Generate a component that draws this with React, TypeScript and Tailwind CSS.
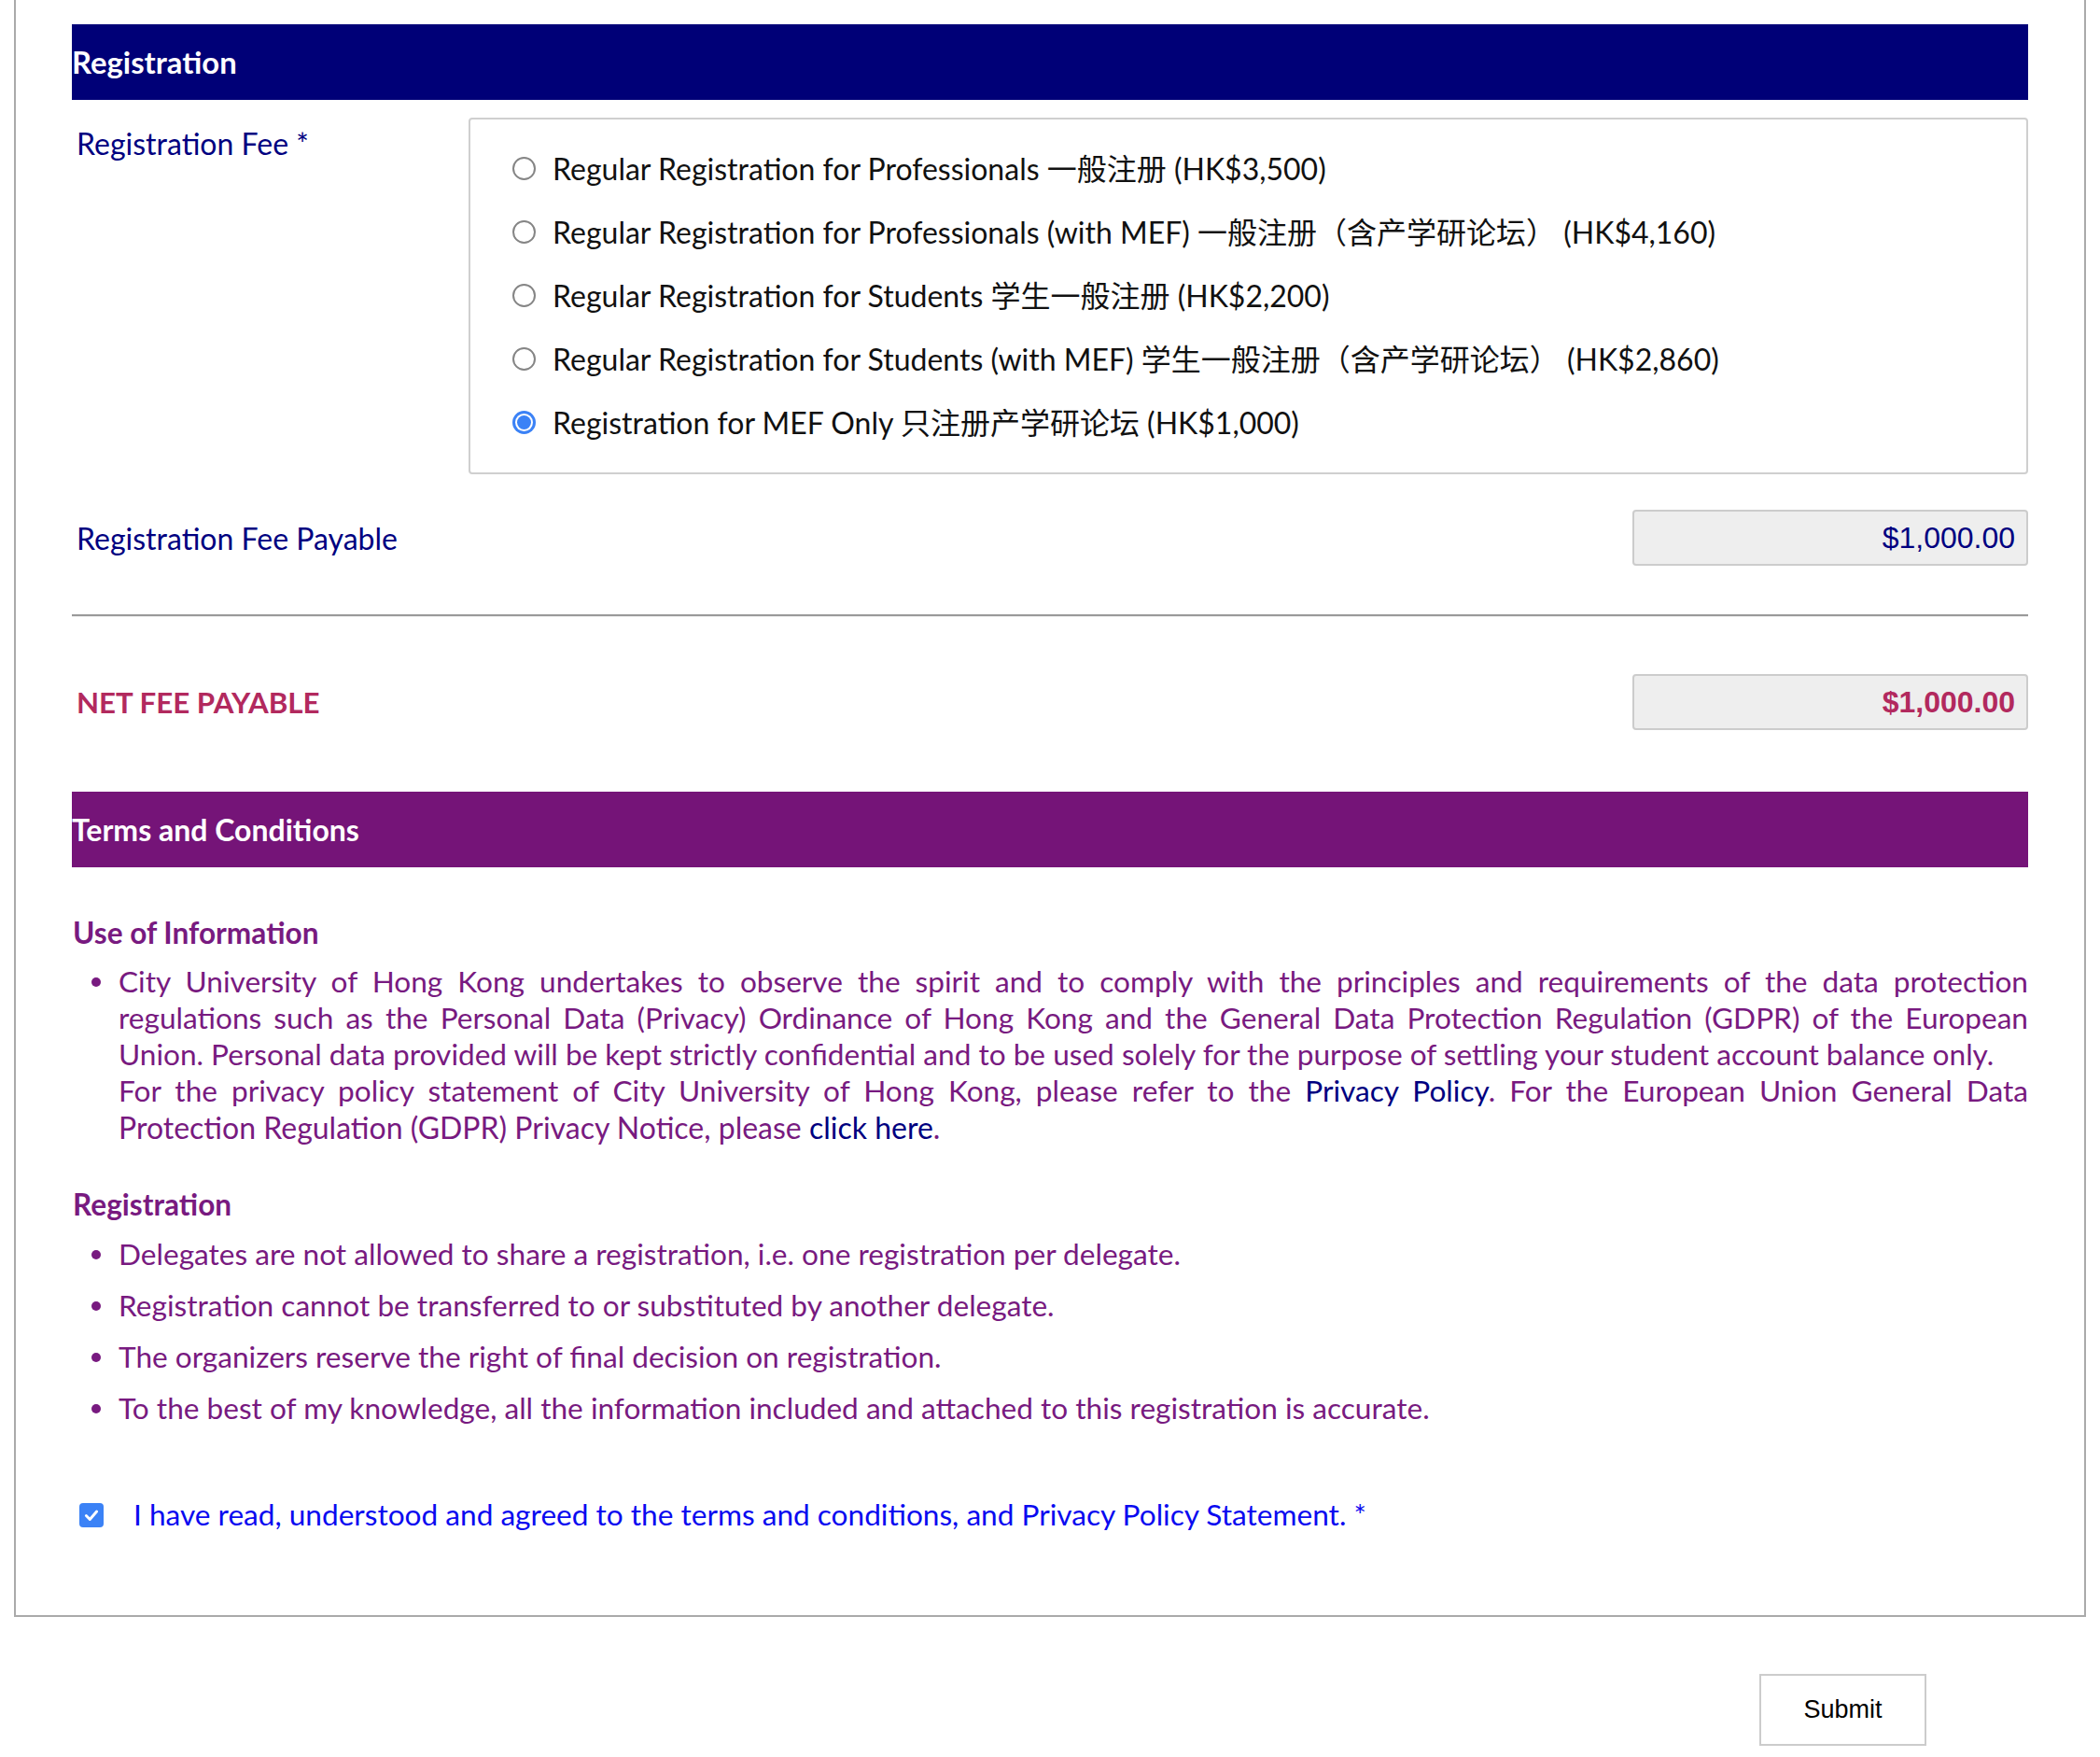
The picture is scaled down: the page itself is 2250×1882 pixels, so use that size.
import React from "react";

const options = [
  { text: "Regular Registration for Professionals 一般注册 (HK$3,500)", checked: false },
  { text: "Regular Registration for Professionals (with MEF) 一般注册（含产学研论坛） (HK$4,160)", checked: false },
  { text: "Regular Registration for Students 学生一般注册 (HK$2,200)", checked: false },
  { text: "Regular Registration for Students (with MEF) 学生一般注册（含产学研论坛） (HK$2,860)", checked: false },
  { text: "Registration for MEF Only 只注册产学研论坛 (HK$1,000)", checked: true },
];

const bullets = [
  "Delegates are not allowed to share a registration, i.e. one registration per delegate.",
  "Registration cannot be transferred to or substituted by another delegate.",
  "The organizers reserve the right of final decision on registration.",
  "To the best of my knowledge, all the information included and attached to this registration is accurate.",
];

function Radio({ checked }: { checked: boolean }) {
  if (checked) {
    return (
      <span className="flex h-[25px] w-[25px] shrink-0 items-center justify-center rounded-full bg-[#3b82f6]">
        <span className="flex h-[19px] w-[19px] items-center justify-center rounded-full bg-white">
          <span className="h-[15px] w-[15px] rounded-full bg-[#3b82f6]" />
        </span>
      </span>
    );
  }
  return <span className="h-[25px] w-[25px] shrink-0 rounded-full border-2 border-[#858585] bg-white" />;
}

function Bullet({ children }: { children: React.ReactNode }) {
  return (
    <li className="flex">
      <span className="flex h-[39px] w-[50px] shrink-0 items-center justify-end pr-[19px]">
        <span className="h-[10px] w-[10px] rounded-full bg-[#781a80]" />
      </span>
      <span className="min-w-0 flex-1">{children}</span>
    </li>
  );
}

export default function App() {
  return (
    <div className="min-h-[1882px] w-[2250px] bg-white font-['Lato','Noto_Sans_CJK_SC',sans-serif] text-[32px] leading-[39px]">
      <div className="ml-[15px] w-[2220px] border-x-2 border-b-2 border-[#aaaaaa] px-[60px] pb-[88px] pt-[26px]">
        {/* Registration header */}
        <div className="flex h-[81px] items-center bg-[#000077] text-[32.8px] font-bold text-white">Registration</div>

        {/* Registration fee */}
        <div className="mt-[19px] flex">
          <div className="w-[425px] shrink-0 pl-[5px] pt-[8px] text-[#000080]">Registration Fee *</div>
          <div className="flex flex-1 flex-col gap-[29px] rounded-[4px] border-2 border-[#cfcfcf] pb-[34px] pl-[45px] pt-[33px] text-[#111111]">
            {options.map((o) => (
              <div key={o.text} className="flex h-[39px] items-center gap-[18px]">
                <Radio checked={o.checked} />
                <span className="whitespace-nowrap">{o.text}</span>
              </div>
            ))}
          </div>
        </div>

        {/* Fee payable */}
        <div className="mt-[38px] flex h-[60px] items-center justify-between">
          <div className="pl-[5px] text-[#000080]">Registration Fee Payable</div>
          <div className="flex h-[60px] w-[424px] items-center justify-end rounded-[4px] border-2 border-[#cccccc] bg-[#eeeeee] pr-[12px] font-['Liberation_Sans',Arial,sans-serif] text-[32px] text-[#000080]">
            $1,000.00
          </div>
        </div>

        <div className="mt-[52px] border-t-2 border-b border-t-[#999999] border-b-[#eeeeee]" />

        {/* Net fee */}
        <div className="mt-[61px] flex h-[60px] items-center justify-between">
          <div className="pl-[5px] text-[31.3px] font-bold text-[#b2295e]">NET FEE PAYABLE</div>
          <div className="flex h-[60px] w-[424px] items-center justify-end rounded-[4px] border-2 border-[#cccccc] bg-[#eeeeee] pr-[12px] font-['Liberation_Sans',Arial,sans-serif] text-[32px] font-bold text-[#b2295e]">
            $1,000.00
          </div>
        </div>

        {/* Terms header */}
        <div className="mt-[66px] flex h-[81px] items-center bg-[#751478] font-bold text-white">Terms and Conditions</div>

        <div className="text-[31.6px] text-[#781a80]">
          <div className="mt-[51px] pl-[1px] font-bold">Use of Information</div>
          <ul className="mt-[13px]">
            <Bullet>
              <div className="whitespace-nowrap text-justify [text-align-last:justify]">
                City University of Hong Kong undertakes to observe the spirit and to comply with the principles and requirements of the data protection
              </div>
              <div className="whitespace-nowrap text-justify [text-align-last:justify]">
                regulations such as the Personal Data (Privacy) Ordinance of Hong Kong and the General Data Protection Regulation (GDPR) of the European
              </div>
              <div className="whitespace-nowrap">
                Union. Personal data provided will be kept strictly confidential and to be used solely for the purpose of settling your student account balance only.
              </div>
              <div className="whitespace-nowrap text-justify [text-align-last:justify]">
                For the privacy policy statement of City University of Hong Kong, please refer to the{" "}
                <span className="text-[#000080]">Privacy Policy</span>. For the European Union General Data
              </div>
              <div className="whitespace-nowrap text-[32px]">
                Protection Regulation (GDPR) Privacy Notice, please <span className="text-[#000080]">click here</span>.
              </div>
            </Bullet>
          </ul>

          <div className="mt-[44px] pl-[1px] font-bold">Registration</div>
          <ul className="mt-[14px] flex flex-col gap-[16px]">
            {bullets.map((b) => (
              <Bullet key={b}>{b}</Bullet>
            ))}
          </ul>
        </div>

        {/* Agreement */}
        <div className="mt-[75px] flex h-[39px] items-center text-[31.6px]">
          <span className="ml-[8px] flex h-[26px] w-[26px] items-center justify-center rounded-[4px] bg-[#3b82f6]">
            <svg viewBox="0 0 16 16" className="h-[18px] w-[18px]" fill="none">
              <path d="M3 8.5 L6.5 12 L13 4.5" stroke="white" strokeWidth="2.6" strokeLinecap="round" strokeLinejoin="round" />
            </svg>
          </span>
          <span className="ml-[32px] text-[#0a0af0]">
            I have read, understood and agreed to the terms and conditions, and Privacy Policy Statement. *
          </span>
        </div>
      </div>

      {/* Submit */}
      <div className="mt-[61px] flex justify-end pr-[186px]">
        <button className="h-[77px] w-[179px] border-2 border-[#cccccc] bg-white font-['Liberation_Sans',Arial,sans-serif] text-[27px] text-black">
          Submit
        </button>
      </div>
    </div>
  );
}
